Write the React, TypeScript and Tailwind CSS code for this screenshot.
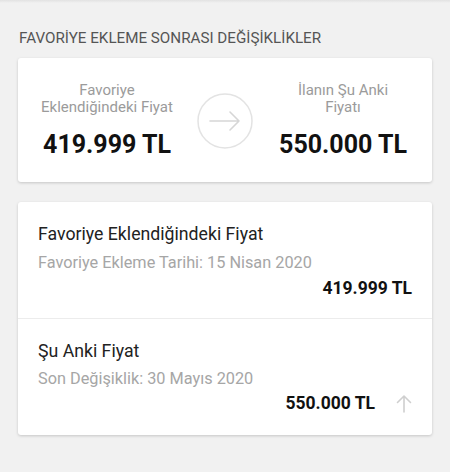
import React from "react";

function ArrowRight() {
  return (
    <svg width="56" height="56" viewBox="0 0 56 56" fill="none">
      <circle cx="28" cy="28" r="27" stroke="#e3e3e3" strokeWidth="1.5" />
      <path d="M13 28 H42 M33 19 L42 28 L33 37" stroke="#d6d6d6" strokeWidth="1.6" strokeLinecap="round" strokeLinejoin="round" />
    </svg>
  );
}

function ArrowUp() {
  return (
    <svg width="16" height="19" viewBox="0 0 16 19" fill="none">
      <path d="M8 18 V2 M1.5 8.5 L8 2 L14.5 8.5" stroke="#cfcfcf" strokeWidth="1.6" strokeLinecap="round" strokeLinejoin="round" />
    </svg>
  );
}

export default function App() {
  return (
    <div
      className="w-[450px] h-[472px] bg-[#f1f1f1] overflow-hidden"
      style={{ fontFamily: "Roboto, 'Noto Sans', sans-serif" }}
    >
      <div className="h-[3px] bg-gradient-to-b from-[#e2e2e2] to-[#f1f1f1]" />
      <div className="pt-[25px] px-[18px]">
        <div className="text-[15.2px] leading-5 text-[#555555] uppercase pl-px">
          FAVORİYE EKLEME SONRASI DEĞİŞİKLİKLER
        </div>
        <div className="mt-[10px] bg-white rounded-[3px] shadow-[0_1px_3px_rgba(0,0,0,0.18)] pt-[24px] pb-[22px] flex items-center">
          <div className="w-[178px] flex flex-col items-center text-center">
            <div className="text-[15px] leading-[17px] text-[#9b9b9b]">
              Favoriye
              <br />
              Eklendiğindeki Fiyat
            </div>
            <div className="mt-[14px] text-[25px] leading-[30px] font-bold text-[#111111]">
              419.999 TL
            </div>
          </div>
          <div className="flex-1 flex justify-center">
            <ArrowRight />
          </div>
          <div className="w-[178px] flex flex-col items-center text-center">
            <div className="text-[15px] leading-[17px] text-[#9b9b9b]">
              İlanın Şu Anki
              <br />
              Fiyatı
            </div>
            <div className="mt-[14px] text-[25px] leading-[30px] font-bold text-[#111111]">
              550.000 TL
            </div>
          </div>
        </div>

        <div className="mt-[20px] bg-white rounded-[3px] shadow-[0_1px_3px_rgba(0,0,0,0.18)]">
          <div className="pl-5 pr-[20px] pt-[21px] pb-[19px] border-b border-[#ececec]">
            <div className="text-[17.7px] leading-[22px] text-[#222222]">Favoriye Eklendiğindeki Fiyat</div>
            <div className="mt-[8px] text-[16.3px] leading-5 text-[#a6a6a6]">
              Favoriye Ekleme Tarihi: 15 Nisan 2020
            </div>
            <div className="mt-[4px] flex justify-end">
              <span className="text-[17.5px] leading-[22px] font-bold text-[#111111]">419.999 TL</span>
            </div>
          </div>
          <div className="pl-5 pr-[20px] pt-[21px] pb-[21px]">
            <div className="text-[17.7px] leading-[22px] text-[#222222]">Şu Anki Fiyat</div>
            <div className="mt-[7px] text-[16.3px] leading-5 text-[#a6a6a6]">
              Son Değişiklik: 30 Mayıs 2020
            </div>
            <div className="mt-[3px] flex justify-end items-center gap-[21px]">
              <span className="text-[17.5px] leading-[22px] font-bold text-[#111111]">550.000 TL</span>
              <ArrowUp />
            </div>
          </div>
        </div>
      </div>
    </div>
  );
}
